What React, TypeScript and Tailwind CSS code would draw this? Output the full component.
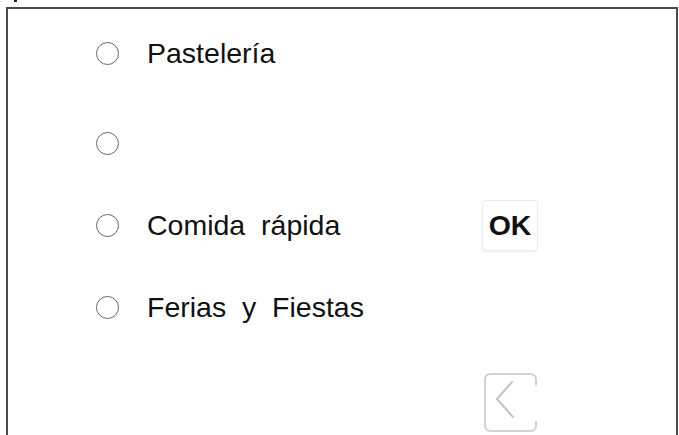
export default function App() {
  const font = { fontFamily: '"Liberation Sans", Arial, sans-serif' };

  const Radio = () => (
    <span className="block w-[23px] h-[23px] shrink-0 rounded-full border-[1.5px] border-[#666] bg-white" />
  );

  return (
    <div className="w-[679px] h-[435px] overflow-hidden bg-white" style={font}>
      {/* stray mark above frame */}
      <div className="ml-[14px] w-[3px] h-[2px] bg-[#222]" />

      <div className="mt-[5px] ml-[6px] w-[672px] h-[440px] border-t-2 border-l-2 border-r-2 border-[#4a4a4a]">
        <div className="pl-[88px] pt-[24px] text-[28.5px] text-[#111] leading-none">
          {/* row 1 */}
          <div className="flex items-center h-[40px]">
            <Radio />
            <span className="ml-[28px]">Pastelería</span>
          </div>

          {/* row 2 */}
          <div className="flex items-center h-[40px] mt-[50px]">
            <Radio />
          </div>

          {/* row 3 */}
          <div className="flex items-center h-[40px] mt-[42px]">
            <Radio />
            <span className="ml-[28px] w-[335px] whitespace-pre">Comida  rápida</span>
            <button className="w-[56px] h-[51px] flex items-center justify-center rounded-[3px] border border-[#ececec] bg-white shadow-[0_1px_2px_rgba(0,0,0,0.06)] font-bold text-[28.5px] text-[#111]">
              OK
            </button>
          </div>

          {/* row 4 */}
          <div className="flex items-center h-[40px] mt-[42px]">
            <Radio />
            <span className="ml-[28px] whitespace-pre">Ferias  y  Fiestas</span>
          </div>

          {/* back button */}
          <div className="mt-[45px] ml-[387px]">
            <svg width="57" height="62" viewBox="0 0 57 62" fill="none">
              <path
                d="M53 13 V8 Q53 2 47 2 H8 Q2 2 2 8 V53 Q2 59 8 59 H47 Q53 59 53 53 V50"
                stroke="#d2d2d2"
                strokeWidth="2"
                strokeLinecap="round"
              />
              <path
                d="M29 10 L14 27 L30 45"
                stroke="#c4c4c4"
                strokeWidth="2"
                strokeLinecap="round"
                strokeLinejoin="round"
              />
            </svg>
          </div>
        </div>
      </div>
    </div>
  );
}
